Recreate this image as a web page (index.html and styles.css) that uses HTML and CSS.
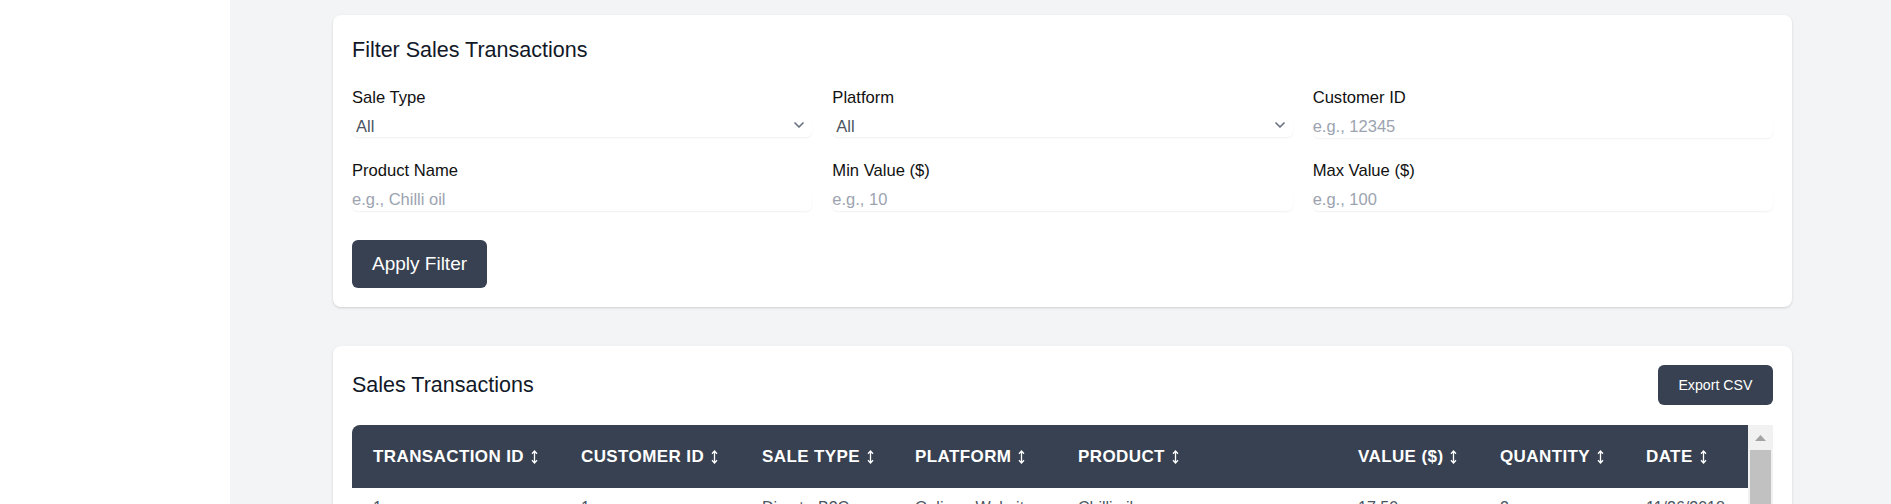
FILE: index.html
```html
<!DOCTYPE html>
<html lang="en">
<head>
<meta charset="utf-8">
<title>Sales Transactions</title>
<link rel="stylesheet" href="styles.css">
</head>
<body>
<div class="layout">
  <aside class="sidebar"></aside>
  <main class="main">
    <section class="card filter-card">
      <h2 class="card-title">Filter Sales Transactions</h2>
      <div class="filter-grid">
        <div class="field">
          <label>Sale Type</label>
          <div class="select-wrap">
            <select class="control select"><option>All</option><option>Direct - B2C</option><option>Direct - B2B</option></select>
            <svg class="chevron" width="10" height="6" viewBox="0 0 10 6"><path d="M1 1l4 4 4-4" fill="none" stroke="#6b7280" stroke-width="1.7" stroke-linecap="round" stroke-linejoin="round"/></svg>
          </div>
        </div>
        <div class="field">
          <label>Platform</label>
          <div class="select-wrap">
            <select class="control select"><option>All</option><option>Online - Website</option><option>Retail Store</option></select>
            <svg class="chevron" width="10" height="6" viewBox="0 0 10 6"><path d="M1 1l4 4 4-4" fill="none" stroke="#6b7280" stroke-width="1.7" stroke-linecap="round" stroke-linejoin="round"/></svg>
          </div>
        </div>
        <div class="field">
          <label>Customer ID</label>
          <input class="control" type="text" placeholder="e.g., 12345">
        </div>
        <div class="field">
          <label>Product Name</label>
          <input class="control" type="text" placeholder="e.g., Chilli oil">
        </div>
        <div class="field">
          <label>Min Value ($)</label>
          <input class="control" type="text" placeholder="e.g., 10">
        </div>
        <div class="field">
          <label>Max Value ($)</label>
          <input class="control" type="text" placeholder="e.g., 100">
        </div>
      </div>
      <button class="btn btn-lg">Apply Filter</button>
    </section>

    <section class="card table-card">
      <div class="card-head">
        <h2 class="card-title">Sales Transactions</h2>
        <button class="btn btn-sm">Export CSV</button>
      </div>
      <div class="table-frame">
        <div class="table-scroll">
          <table>
            <colgroup>
              <col class="w-tid"><col class="w-cid"><col class="w-type"><col class="w-plat"><col class="w-prod"><col class="w-val"><col class="w-qty"><col class="w-date">
            </colgroup>
            <thead>
              <tr>
                <th>Transaction ID<svg class="sort" width="7" height="14" viewBox="0 0 7 14"><path d="M3.5 1v12M1 3.8L3.5 1 6 3.8M1 10.2L3.5 13 6 10.2" fill="none" stroke="#fff" stroke-width="1.3"/></svg></th>
                <th>Customer ID<svg class="sort" width="7" height="14" viewBox="0 0 7 14"><path d="M3.5 1v12M1 3.8L3.5 1 6 3.8M1 10.2L3.5 13 6 10.2" fill="none" stroke="#fff" stroke-width="1.3"/></svg></th>
                <th>Sale Type<svg class="sort" width="7" height="14" viewBox="0 0 7 14"><path d="M3.5 1v12M1 3.8L3.5 1 6 3.8M1 10.2L3.5 13 6 10.2" fill="none" stroke="#fff" stroke-width="1.3"/></svg></th>
                <th>Platform<svg class="sort" width="7" height="14" viewBox="0 0 7 14"><path d="M3.5 1v12M1 3.8L3.5 1 6 3.8M1 10.2L3.5 13 6 10.2" fill="none" stroke="#fff" stroke-width="1.3"/></svg></th>
                <th>Product<svg class="sort" width="7" height="14" viewBox="0 0 7 14"><path d="M3.5 1v12M1 3.8L3.5 1 6 3.8M1 10.2L3.5 13 6 10.2" fill="none" stroke="#fff" stroke-width="1.3"/></svg></th>
                <th>Value ($)<svg class="sort" width="7" height="14" viewBox="0 0 7 14"><path d="M3.5 1v12M1 3.8L3.5 1 6 3.8M1 10.2L3.5 13 6 10.2" fill="none" stroke="#fff" stroke-width="1.3"/></svg></th>
                <th>Quantity<svg class="sort" width="7" height="14" viewBox="0 0 7 14"><path d="M3.5 1v12M1 3.8L3.5 1 6 3.8M1 10.2L3.5 13 6 10.2" fill="none" stroke="#fff" stroke-width="1.3"/></svg></th>
                <th>Date<svg class="sort" width="7" height="14" viewBox="0 0 7 14"><path d="M3.5 1v12M1 3.8L3.5 1 6 3.8M1 10.2L3.5 13 6 10.2" fill="none" stroke="#fff" stroke-width="1.3"/></svg></th>
              </tr>
            </thead>
            <tbody>
              <tr><td>1</td><td>1</td><td>Direct - B2C</td><td>Online - Website</td><td>Chilli oil</td><td>17.50</td><td>2</td><td>11/26/2018</td></tr>
              <tr><td>2</td><td>2</td><td>Direct - B2C</td><td>Online - Website</td><td>Garlic sauce</td><td>12.00</td><td>1</td><td>11/27/2018</td></tr>
              <tr><td>3</td><td>3</td><td>Direct - B2B</td><td>Retail Store</td><td>Chilli oil</td><td>35.00</td><td>4</td><td>11/28/2018</td></tr>
              <tr><td>4</td><td>1</td><td>Direct - B2C</td><td>Online - Website</td><td>Soy glaze</td><td>9.75</td><td>1</td><td>12/01/2018</td></tr>
              <tr><td>5</td><td>4</td><td>Direct - B2B</td><td>Online - Website</td><td>Chilli oil</td><td>52.50</td><td>6</td><td>12/03/2018</td></tr>
              <tr><td>6</td><td>5</td><td>Direct - B2C</td><td>Retail Store</td><td>Hot honey</td><td>14.25</td><td>3</td><td>12/05/2018</td></tr>
              <tr><td>7</td><td>2</td><td>Direct - B2C</td><td>Online - Website</td><td>Chilli oil</td><td>17.50</td><td>2</td><td>12/09/2018</td></tr>
              <tr><td>8</td><td>6</td><td>Direct - B2B</td><td>Online - Website</td><td>Garlic sauce</td><td>48.00</td><td>4</td><td>12/12/2018</td></tr>
              <tr><td>9</td><td>7</td><td>Direct - B2C</td><td>Retail Store</td><td>Chilli oil</td><td>8.75</td><td>1</td><td>12/15/2018</td></tr>
              <tr><td>10</td><td>3</td><td>Direct - B2C</td><td>Online - Website</td><td>Soy glaze</td><td>19.50</td><td>2</td><td>12/18/2018</td></tr>
            </tbody>
          </table>
        </div>
        <div class="vscroll" aria-hidden="true">
          <div class="vscroll-btn"><svg width="11" height="6" viewBox="0 0 11 6"><path d="M0 6L5.5 0 11 6z" fill="#a3a3a3"/></svg></div>
          <div class="vscroll-thumb"></div>
        </div>
      </div>
    </section>
  </main>
</div>
</body>
</html>
```

FILE: styles.css
```css
* { box-sizing: border-box; }

html, body { margin: 0; }

body {
  font-family: "Liberation Sans", Arial, sans-serif;
  background: #f3f4f6;
  color: #111827;
}

.layout {
  display: flex;
  min-height: 100vh;
}

.sidebar {
  width: 230px;
  flex-shrink: 0;
  background: #ffffff;
}

.main {
  flex: 1;
  min-width: 0;
  padding: 15px 99px 40px 103px;
  display: flex;
  flex-direction: column;
  gap: 39px;
}

.card {
  background: #ffffff;
  border-radius: 8px;
  box-shadow: 0 1px 3px rgba(0, 0, 0, 0.1), 0 1px 2px rgba(0, 0, 0, 0.06);
  padding: 19px;
}

.card-title {
  margin: 0;
  font-size: 21.5px;
  line-height: 32px;
  font-weight: 400;
  color: #111827;
}

.filter-card .card-title { margin-bottom: 20px; }

.filter-grid {
  display: grid;
  grid-template-columns: repeat(3, 1fr);
  gap: 21px 20px;
}

.field label {
  display: block;
  font-size: 16.6px;
  line-height: 24px;
  color: #111111;
}

.control {
  display: block;
  width: 100%;
  height: 24px;
  margin-top: 4px;
  padding: 0;
  border: 0;
  border-radius: 6px;
  background: #ffffff;
  box-shadow: 0 1px 2px rgba(0, 0, 0, 0.06);
  font-family: inherit;
  font-size: 16.5px;
  color: #374151;
  outline: none;
}

.control::placeholder { color: #9ca3af; }

.select-wrap {
  position: relative;
  margin-top: 5px;
}

.select {
  -webkit-appearance: none;
  appearance: none;
  margin-top: 0;
  height: 22px;
  padding: 0 24px 0 4px;
  color: #4b5563;
}

.chevron {
  position: absolute;
  right: 8px;
  top: 7px;
  pointer-events: none;
}

.btn {
  background: #374151;
  color: #ffffff;
  border: 0;
  border-radius: 6px;
  font-family: inherit;
  cursor: pointer;
}

.btn-lg {
  margin-top: 29px;
  font-size: 19px;
  line-height: 28px;
  padding: 10px 20px;
}

.btn-sm {
  font-size: 14.2px;
  line-height: 20px;
  padding: 10px 20.5px;
}

.card-head {
  display: flex;
  justify-content: space-between;
  align-items: center;
  margin-bottom: 20px;
}

.table-frame {
  display: flex;
  max-height: 460px;
  overflow: hidden;
}

.table-scroll {
  flex: 1;
  min-width: 0;
  overflow: hidden;
}

.vscroll {
  width: 25px;
  flex-shrink: 0;
  background: #f1f1f1;
  display: flex;
  flex-direction: column;
}

.vscroll-btn {
  height: 25px;
  display: flex;
  align-items: center;
  justify-content: center;
}

.vscroll-thumb {
  height: 240px;
  margin: 0 2px;
  background: #c1c1c1;
}

table {
  width: 100%;
  table-layout: fixed;
  border-collapse: separate;
  border-spacing: 0;
}

.w-tid { width: 208px; }
.w-cid { width: 181px; }
.w-type { width: 153px; }
.w-plat { width: 163px; }
.w-prod { width: 280px; }
.w-val { width: 142px; }
.w-qty { width: 146px; }
.w-date { width: 123px; }

th {
  background: #374151;
  color: #ffffff;
  text-align: left;
  text-transform: uppercase;
  font-size: 17px;
  font-weight: 700;
  letter-spacing: 0.4px;
  line-height: 23px;
  padding: 20px 21px;
  white-space: nowrap;
}

th:first-child { border-top-left-radius: 8px; }

.sort {
  margin-left: 7px;
  vertical-align: -2px;
}

td {
  padding: 8px 21px 12px;
  font-size: 16px;
  line-height: 24px;
  color: #4b5563;
  white-space: nowrap;
}
```
